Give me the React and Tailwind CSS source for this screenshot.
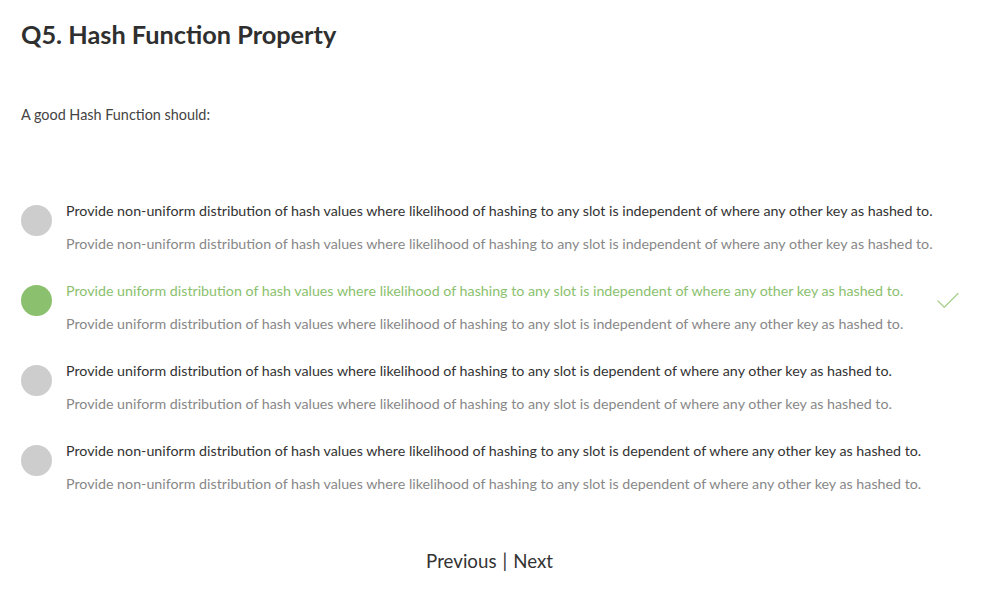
import { Check } from 'lucide-react'

const OPTIONS = [
  { text: 'Provide non-uniform distribution of hash values where likelihood of hashing to any slot is independent of where any other key as hashed to.', correct: false },
  { text: 'Provide uniform distribution of hash values where likelihood of hashing to any slot is independent of where any other key as hashed to.', correct: true },
  { text: 'Provide uniform distribution of hash values where likelihood of hashing to any slot is dependent of where any other key as hashed to.', correct: false },
  { text: 'Provide non-uniform distribution of hash values where likelihood of hashing to any slot is dependent of where any other key as hashed to.', correct: false },
]

export default function App() {
  return (
    <div className="w-[984px] h-[608px] bg-white text-[#333] px-[21px] pt-[17px]" style={{ fontFamily: 'Lato, "Open Sans", sans-serif' }}>
      <h1 className="text-[25.3px] font-bold leading-[34px] text-[#2f2f2f]">Q5. Hash Function Property</h1>
      <p className="mt-[49px] text-[14.4px] leading-[30px] text-[#444]">A good Hash Function should:</p>

      <div className="mt-[64px] flex flex-col gap-[14px]">
        {OPTIONS.map((o, i) => (
          <div key={i} className="flex items-start">
            <div className={`mt-[11px] w-[31px] h-[31px] rounded-full shrink-0 ${o.correct ? 'bg-[#8bc16e]' : 'bg-[#cdcdcd]'}`} />
            <div className="ml-[14px] flex-1 min-w-0 whitespace-nowrap">
              <div className={`text-[14.25px] leading-[33px] ${o.correct ? 'text-[#8bc16e]' : 'text-[#333]'}`}>{o.text}</div>
              <div className="text-[14.25px] leading-[33px] text-[#888]">{o.text}</div>
            </div>
            <div className="w-[30px] shrink-0 pt-[12px]">
              {o.correct && <Check size={30} strokeWidth={1} color="#a8d08d" />}
            </div>
          </div>
        ))}
      </div>

      <div className="mt-[47px] mr-[5px] flex justify-center text-[18.7px] text-[#333]">
        <span>Previous</span>
        <span className="mx-[6px]">|</span>
        <span>Next</span>
      </div>
    </div>
  )
}
